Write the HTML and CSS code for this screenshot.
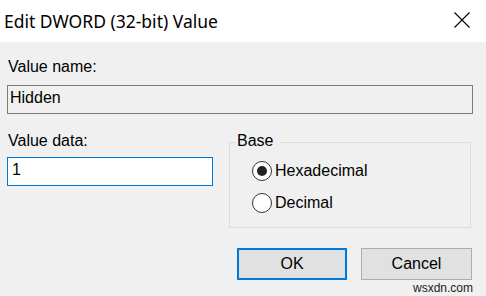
FILE: index.html
```html
<!DOCTYPE html>
<html lang="en">
<head>
    <meta charset="UTF-8">
    <title>Edit DWORD (32-bit) Value</title>
    <link rel="stylesheet" href="styles.css">
</head>
<body>

    <div class="titlebar">
        <span class="title">Edit DWORD (32-bit) Value</span>
        <span class="close-button">
            <svg width="16" height="16" viewBox="0 0 16 16">
                <path d="M0.5 0.5 L15.5 15.5 M15.5 0.5 L0.5 15.5" stroke="#000" stroke-width="1.1" fill="none"/>
            </svg>
        </span>
    </div>

    <div class="dialog">
        <div class="field-label">Value name:</div>
        <div class="name-box">Hidden</div>

        <div class="data-row">
            <div class="data-column">
                <div class="field-label">Value data:</div>
                <div class="data-input">1</div>
            </div>

            <fieldset class="base-group">
                <legend>Base</legend>
                <label class="radio-row">
                    <span class="radio checked"></span>
                    <span>Hexadecimal</span>
                </label>
                <label class="radio-row">
                    <span class="radio"></span>
                    <span>Decimal</span>
                </label>
            </fieldset>
        </div>

        <div class="buttons">
            <button class="dialog-button default">OK</button>
            <button class="dialog-button">Cancel</button>
        </div>

        <div class="watermark">wsxdn.com</div>
    </div>

</body>
</html>
```

FILE: styles.css
```css
body {
    margin: 0;
    width: 486px;
    height: 296px;
    overflow: hidden;
    background-color: #f0f0f0;
    font-family: 'Liberation Sans', Arial, sans-serif;
    font-size: 16px;
    color: #000;
}

.titlebar {
    height: 42px;
    background-color: #fff;
    display: flex;
    justify-content: space-between;
    align-items: center;
    padding: 0 16px 0 4px;
}

.title {
    font-family: 'Noto Sans', sans-serif;
    font-size: 17.5px;
    line-height: 24px;
    padding-bottom: 1px;
}

.close-button {
    display: flex;
    height: 16px;
    padding-bottom: 3px;
}

.dialog {
    padding: 0 13px 0 7px;
}

.field-label {
    line-height: 18px;
    padding-left: 1px;
}

.dialog > .field-label {
    margin-top: 16px;
}

.name-box {
    margin-top: 9px;
    height: 29px;
    box-sizing: border-box;
    border: 1px solid #7a7a7a;
    padding: 0 2px;
    line-height: 23px;
    background-color: #f0f0f0;
}

.data-row {
    display: flex;
    gap: 16px;
    margin-top: 18px;
}

.data-column {
    width: 206px;
}

.data-input {
    margin-top: 7px;
    height: 29px;
    box-sizing: border-box;
    border: 1px solid #0078d7;
    background-color: #fff;
    padding: 0 4px;
    line-height: 23px;
}

.base-group {
    width: 242px;
    box-sizing: border-box;
    margin: 0;
    padding: 3px 0 8px 6px;
    border: 1px solid #dcdcdc;
    min-inline-size: 0;
}

.base-group legend {
    padding: 0 7px 2px 1px;
    line-height: 18px;
}

.radio-row {
    display: flex;
    align-items: center;
    height: 32px;
    line-height: 32px;
    padding-left: 16px;
}

.radio {
    width: 20px;
    height: 20px;
    box-sizing: border-box;
    border: 1.5px solid #333;
    border-radius: 50%;
    background-color: #fff;
    margin-right: 3px;
    display: flex;
    align-items: center;
    justify-content: center;
}

.radio.checked::after {
    content: '';
    width: 10px;
    height: 10px;
    border-radius: 50%;
    background-color: #222;
}

.buttons {
    display: flex;
    justify-content: flex-end;
    gap: 14px;
    margin-top: 20px;
    padding-right: 1px;
}

.dialog-button {
    height: 32px;
    box-sizing: border-box;
    font-family: 'Liberation Sans', Arial, sans-serif;
    font-size: 16px;
    color: #000;
    background-color: #e1e1e1;
    border: 1px solid #adadad;
    padding: 0;
    width: 111px;
}

.dialog-button.default {
    width: 110px;
    border: 2px solid #0078d7;
}

.watermark {
    text-align: right;
    font-size: 12px;
    line-height: 14px;
    margin-top: 1px;
    padding-right: 0;
    color: #222;
}
```
